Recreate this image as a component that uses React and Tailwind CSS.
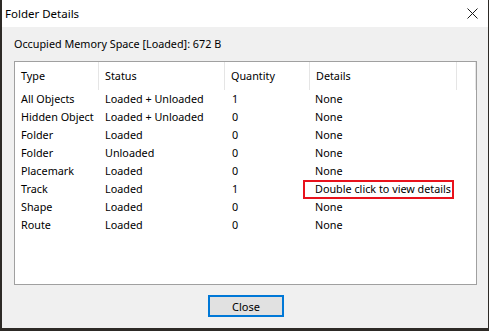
import React from 'react';

const rows = [
  ['All Objects', 'Loaded + Unloaded', '1', 'None'],
  ['Hidden Object', 'Loaded + Unloaded', '0', 'None'],
  ['Folder', 'Loaded', '0', 'None'],
  ['Folder', 'Unloaded', '0', 'None'],
  ['Placemark', 'Loaded', '0', 'None'],
  ['Track', 'Loaded', '1', 'Double click to view details'],
  ['Shape', 'Loaded', '0', 'None'],
  ['Route', 'Loaded', '0', 'None'],
];

const cols = 'grid grid-cols-[84px_126px_85px_147px_1fr]';

export default function App() {
  return (
    <div
      className="w-[489px] h-[331px] flex flex-col bg-[#f0f0f0] border-l-2 border-r border-b-[3px] border-[#2d2a26] text-[10.8px] text-black overflow-hidden whitespace-nowrap"
      style={{ fontFamily: '"Noto Sans", "Segoe UI", sans-serif' }}
    >
      {/* title bar */}
      <div className="h-[27px] bg-white flex items-center justify-between pl-[3px] pr-[8px] shrink-0">
        <span className="text-[11.5px]">Folder Details</span>
        <svg width="11" height="11" viewBox="0 0 11 11" className="mr-[2px]">
          <path d="M0.5 0.5 L10.5 10.5 M10.5 0.5 L0.5 10.5" stroke="#1a1a1a" strokeWidth="1" fill="none" />
        </svg>
      </div>

      <div className="flex flex-col flex-1 px-[11px]">
        <div className="h-[34px] flex items-center pl-[1px]">Occupied Memory Space [Loaded]: 672 B</div>

        {/* list view */}
        <div className="h-[224px] bg-white border border-[#a0a0a0] ml-[1px]">
          <div className={`${cols} h-[28px]`}>
            {['Type', 'Status', 'Quantity', 'Details', ''].map((h, i) => (
              <div key={i} className="flex items-center pl-[6px] border-r border-[#e5e5e5]">
                {h}
              </div>
            ))}
          </div>
          {rows.map((r, i) => (
            <div key={i} className={`${cols} h-[18px]`}>
              <div className="flex items-center pl-[6px]">{r[0]}</div>
              <div className="flex items-center pl-[6px]">{r[1]}</div>
              <div className="flex items-center pl-[7px]">{r[2]}</div>
              <div className="relative flex items-center pl-[5px]">
                {r[3]}
                {r[0] === 'Track' && (
                  <span className="absolute left-[-7px] top-0 w-[151px] h-[19px] border-2 border-[#e8121c]" />
                )}
              </div>
              <div />
            </div>
          ))}
        </div>

        <div className="flex justify-center pt-[10px] pl-[2px]">
          <button className="w-[76px] h-[22px] bg-[#e1e1e1] border-2 border-[#0078d7] flex items-center justify-center leading-none text-[11px]">
            Close
          </button>
        </div>
      </div>
    </div>
  );
}
